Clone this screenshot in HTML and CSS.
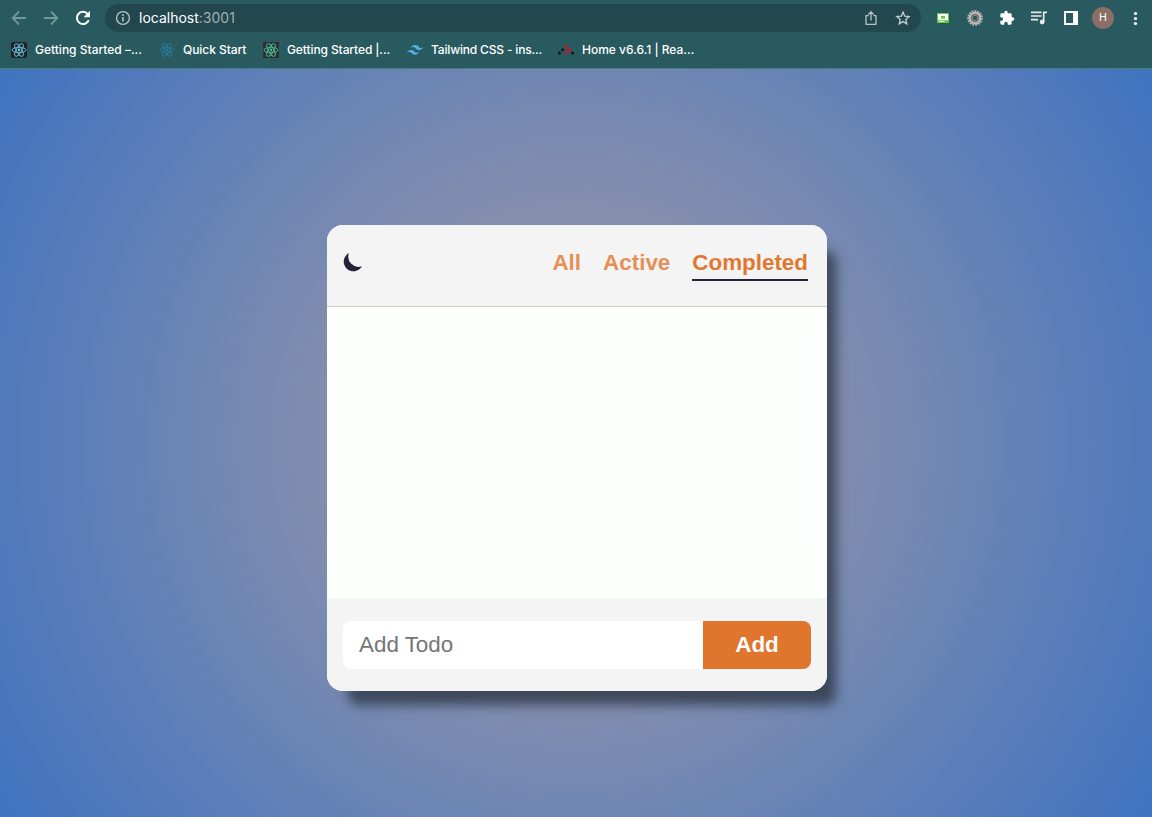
FILE: index.html
```html
<!DOCTYPE html>
<html lang="en">
<head>
<meta charset="utf-8">
<title>Todo</title>
<link rel="stylesheet" href="styles.css">
</head>
<body>
<svg class="defs" width="0" height="0">
  <symbol id="atom" viewBox="0 0 16 16">
    <g fill="none" stroke="currentColor" stroke-width="1">
      <ellipse cx="8" cy="8" rx="7" ry="2.7"/>
      <ellipse cx="8" cy="8" rx="7" ry="2.7" transform="rotate(60 8 8)"/>
      <ellipse cx="8" cy="8" rx="7" ry="2.7" transform="rotate(120 8 8)"/>
    </g>
    <circle cx="8" cy="8" r="1.4" fill="currentColor"/>
  </symbol>
</svg>
<header class="browser">
  <div class="toolbar">
    <div class="nav">
      <svg class="dim" width="16" height="16" viewBox="0 0 16 16"><path d="M15 8H2M8 1.5 1.7 8 8 14.5" fill="none" stroke="currentColor" stroke-width="1.8"/></svg>
      <svg class="dim" width="16" height="16" viewBox="0 0 16 16"><path d="M1 8h13M8 1.5 14.3 8 8 14.5" fill="none" stroke="currentColor" stroke-width="1.8"/></svg>
      <svg width="16" height="16" viewBox="0 0 16 16"><path d="M13.7 10.2A6.1 6.1 0 1 1 12.4 3.7L14 5.4" fill="none" stroke="#fff" stroke-width="2"/><path d="M15 .8v6.4H8.6z" fill="#fff"/></svg>
    </div>
    <div class="address">
      <svg width="16" height="16" viewBox="0 0 16 16"><circle cx="8" cy="8" r="6.4" fill="none" stroke="#b5c3c6" stroke-width="1.4"/><path d="M8 7v4.4M8 4.3v1.6" stroke="#b5c3c6" stroke-width="1.6"/></svg>
      <span class="url">localhost<span class="port">:3001</span></span>
      <svg class="share" width="16" height="16" viewBox="0 0 16 16"><path d="M5.500 5.700H3v8.600h10V5.700h-2.500M8 10.500V2M5.200 4.600 8 1.800l2.800 2.800" fill="none" stroke="#b8c5c7" stroke-width="1.300" stroke-linejoin="round"/></svg>
      <svg width="16" height="16" viewBox="0 0 16 16"><path d="m8 2.100 1.700 4.100 4.500.4-3.400 2.900 1 4.400L8 11.600l-3.800 2.300 1-4.400-3.400-2.900 4.500-.4z" fill="none" stroke="#c4ced0" stroke-width="1.300"/></svg>
    </div>
    <div class="extensions">
      <svg width="16" height="16" viewBox="0 0 16 16"><path d="M2 3h12v10H2z" fill="#5fc83b"/><path d="M3 4h10v6.200H3zM4 11.300h5.500v.7H4z" fill="#fff"/><path d="M6 6h4v2.600H6z" fill="#5fc83b"/></svg>
      <svg width="16" height="16" viewBox="0 0 16 16"><circle cx="8" cy="8" r="6.800" fill="none" stroke="#b9b7b5" stroke-width="2" stroke-dasharray="1.900 .947"/><circle cx="8" cy="8" r="4.300" fill="none" stroke="#b9b7b5" stroke-width="4"/><circle cx="8" cy="8" r="3.300" fill="none" stroke="#66625f" stroke-width="1.300"/><circle cx="8" cy="8" r="2" fill="#285960"/></svg>
      <svg width="16" height="16" viewBox="0 0 24 24"><path d="M20.500 11H19V7a2 2 0 0 0-2-2h-4V3.500a2.500 2.500 0 0 0-5 0V5H4a2 2 0 0 0-2 2v3.800h1.500a2.700 2.700 0 0 1 0 5.400H2V20a2 2 0 0 0 2 2h3.800v-1.500a2.700 2.700 0 0 1 5.400 0V22H17a2 2 0 0 0 2-2v-4h1.500a2.500 2.500 0 0 0 0-5z" fill="#fff"/></svg>
      <svg width="16" height="16" viewBox="0 0 16 16"><path d="M0 2.400h10.500M0 6h10.500M0 9.600h7" stroke="#e4eaeb" stroke-width="1.600"/><path d="M12.700 12V2.400H16" fill="none" stroke="#e4eaeb" stroke-width="1.700"/><circle cx="11.200" cy="12" r="2.400" fill="#e4eaeb"/></svg>
      <svg width="16" height="16" viewBox="0 0 16 16"><path fill-rule="evenodd" d="M1 1h14v14H1zM3 3v10h7V3z" fill="#fff"/></svg>
      <span class="avatar">H</span>
      <svg width="16" height="16" viewBox="0 0 16 16" fill="#fff"><circle cx="8.500" cy="3.500" r="1.600"/><circle cx="8.500" cy="8.500" r="1.600"/><circle cx="8.500" cy="13.500" r="1.600"/></svg>
    </div>
  </div>
  <nav class="bookmarks">
    <a class="mark m1"><svg class="vite" width="16" height="16"><use href="#atom"/></svg><span>Getting Started –...</span></a>
    <a class="mark m2"><svg class="quick" width="16" height="16"><use href="#atom"/></svg><span>Quick Start</span></a>
    <a class="mark m3"><svg class="query" width="16" height="16"><use href="#atom"/></svg><span>Getting Started |...</span></a>
    <a class="mark m4"><svg width="16" height="16" viewBox="0 0 54 33"><path fill="#55afe8" d="M27 0C19.800 0 15.300 3.600 13.500 10.800c2.700-3.600 5.850-4.950 9.450-4.050 2.050.51 3.520 2 5.150 3.650C30.750 13.090 33.800 16.200 40.500 16.200c7.200 0 11.700-3.600 13.500-10.800-2.700 3.600-5.850 4.950-9.450 4.050-2.050-.51-3.520-2-5.150-3.650C36.750 3.110 33.700 0 27 0zM13.500 16.200C6.300 16.200 1.800 19.800 0 27c2.700-3.600 5.850-4.950 9.450-4.050 2.050.51 3.520 2 5.150 3.650 2.650 2.690 5.700 5.800 12.400 5.800 7.200 0 11.700-3.600 13.500-10.800-2.700 3.600-5.850 4.950-9.450 4.050-2.050-.51-3.520-2-5.150-3.650-2.650-2.690-5.700-5.800-12.400-5.800z"/></svg><span>Tailwind CSS - ins...</span></a>
    <a class="mark m5"><svg width="16" height="16" viewBox="0 0 16 16"><path d="M8 4.700 11 7.800 8 10.600" fill="none" stroke="#b3202b" stroke-width="1.500"/><g fill="#b3202b"><circle cx="8" cy="4.700" r="1.600"/><circle cx="11.200" cy="7.800" r="1.700"/><circle cx="8" cy="10.600" r="1.600"/></g><g fill="#121212"><circle cx="4.700" cy="7.800" r="1.500"/><circle cx="1.500" cy="11" r="1.500"/><circle cx="14.500" cy="11" r="1.500"/></g></svg><span>Home v6.6.1 | Rea...</span></a>
  </nav>
</header>
<main class="page">
  <section class="card">
    <div class="card-head">
      <svg class="moon" width="20" height="20" viewBox="0 0 20 20"><path d="M6 1A9.700 9.700 0 1 0 19 14.200 10.200 10.200 0 0 1 6 1z" fill="#23233b"/></svg>
      <div class="filters">
        <button class="filter">All</button>
        <button class="filter">Active</button>
        <button class="filter selected">Completed</button>
      </div>
    </div>
    <div class="list"></div>
    <form class="card-foot">
      <input class="field" type="text" placeholder="Add Todo">
      <button class="add" type="button">Add</button>
    </form>
  </section>
</main>
</body>
</html>
```
FILE: styles.css
```css
* { box-sizing: border-box; }
body {
  margin: 0;
  height: 817px;
  display: flex;
  flex-direction: column;
  overflow: hidden;
  font-family: "Liberation Sans", Arial, sans-serif;
}
svg { display: block; flex: none; }
.defs { position: absolute; }

.browser {
  height: 69px;
  background: #285a60;
  border-bottom: 1px solid #4a7b7e;
  color: #fff;
  font-family: Inter, sans-serif;
}
.toolbar { display: flex; align-items: center; height: 36px; }
.nav { display: flex; gap: 16px; padding-left: 11px; width: 105px; }
.dim { color: #75989c; }
.address {
  display: flex;
  align-items: center;
  width: 816px;
  height: 28px;
  padding: 0 10px;
  border-radius: 14px;
  background: #22474e;
}
.url { margin: -1px 0 0 8px; font-size: 14px; }
.port { color: #9fb1b4; }
.share { margin-left: auto; margin-right: 16px; }
.extensions { display: flex; align-items: center; gap: 16px; margin-left: 14px; }
.avatar {
  width: 22px;
  height: 22px;
  margin: 0 -3px;
  border-radius: 50%;
  background: #8b6f66;
  font: 11px/22px Roboto, sans-serif;
  text-align: center;
}
.bookmarks { display: flex; height: 28px; padding-left: 11px; }
.mark { display: flex; align-items: center; gap: 8px; font-size: 12px; font-weight: 500; white-space: nowrap; }
.mark span { margin-top: -2px; }
.m1 { width: 148px; }
.m2 { width: 104px; letter-spacing: -.06px; }
.m3 { width: 144px; letter-spacing: -.1px; }
.m4 { width: 151px; letter-spacing: -.17px; }
.vite { background: #20232a; color: #61b5d0; border-radius: 2px; }
.quick { color: #2b7796; }
.query { background: #303038; color: #43b68c; }

.page {
  flex: 1;
  display: flex;
  align-items: flex-start;
  justify-content: center;
  padding: 156px 0 0 2px;
  background: radial-gradient(circle, #a99da4 0%, #3f73c0 100%);
}
.card {
  display: flex;
  flex-direction: column;
  width: 500px;
  height: 466px;
  border-radius: 16px;
  background: #fdfffc;
  box-shadow: 15px 20px 12px -6px rgba(37, 47, 58, .72);
}
.card-head {
  display: flex;
  align-items: flex-start;
  justify-content: space-between;
  height: 82px;
  padding: 24px 19px 0 16px;
  border-bottom: 1px solid #ccc;
  border-radius: 16px 16px 0 0;
  background: #f4f4f4;
}
.moon { margin-top: 3px; }
.filters { display: flex; gap: 22px; }
.filter {
  padding: 0 0 3px;
  height: 32px;
  border: 0;
  border-bottom: 2px solid transparent;
  background: none;
  color: #e27730;
  font: bold 22.400px/27px "Liberation Sans", Arial, sans-serif;
  opacity: .8;
}
.filter.selected { opacity: 1; border-bottom-color: #23233b; }
.list { flex: 1; }
.card-foot {
  display: flex;
  height: 93px;
  padding: 23px 16px 22px;
  border-radius: 0 0 16px 16px;
  background: #f4f4f4;
}
.field {
  width: 360px;
  padding: 0 16px;
  border: 0;
  border-radius: 8px 0 0 8px;
  background: #fff;
  font: 22.400px "Liberation Sans", Arial, sans-serif;
}
.field::placeholder { color: #757575; }
.add {
  width: 108px;
  padding: 0;
  border: 0;
  border-radius: 0 8px 8px 0;
  background: #e0752d;
  color: #fff;
  font: bold 22.400px "Liberation Sans", Arial, sans-serif;
}
```
